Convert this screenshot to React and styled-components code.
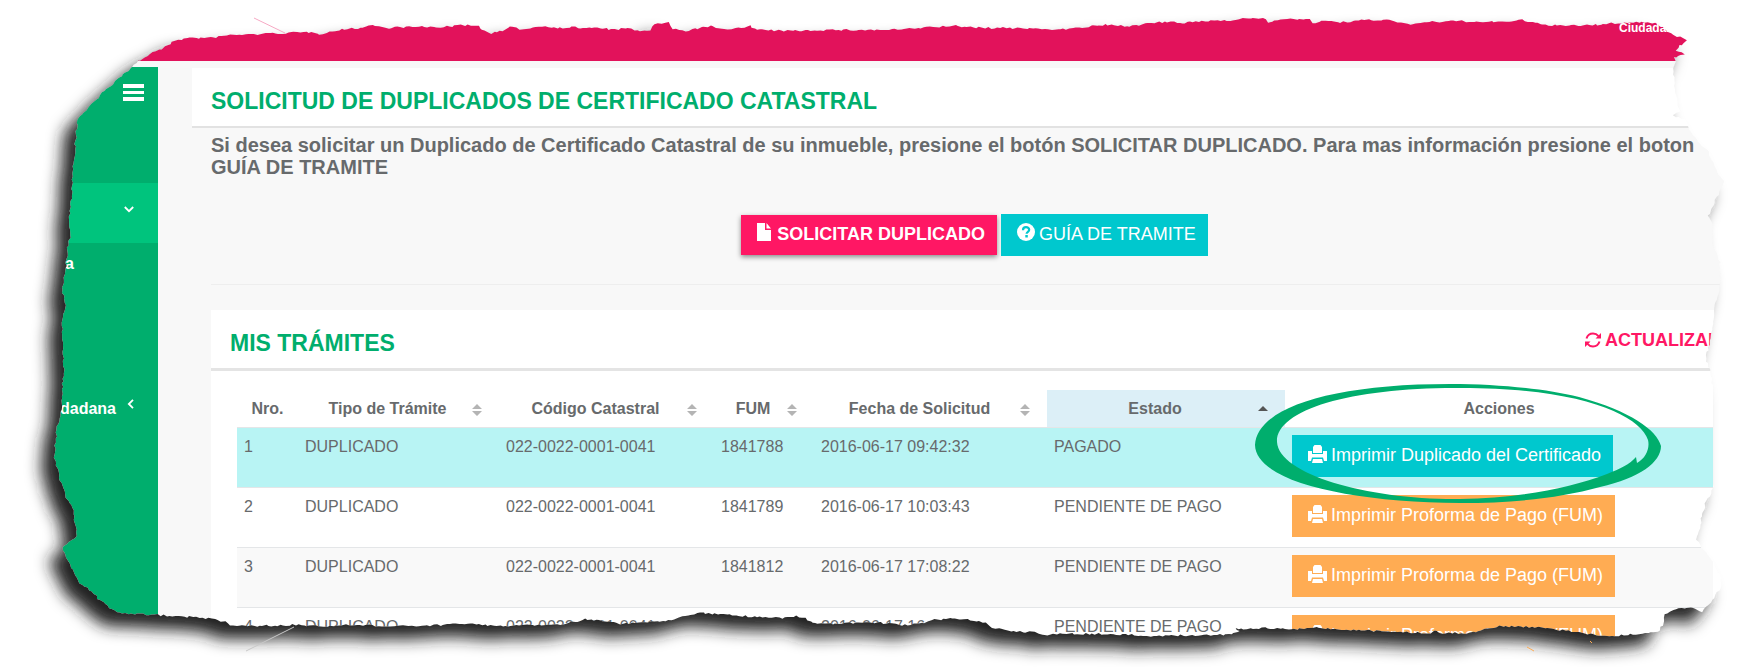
import React from "react";
import styled, { createGlobalStyle } from "styled-components";

const Global = createGlobalStyle`
  * { box-sizing: border-box; }
  body { margin: 0; background: #fff; font-family: "Liberation Sans", Arial, sans-serif; font-size: 16px; line-height: 23px; color: #676a6c; }
`;

const Page = styled.div`
  position: relative;
  height: 100vh;
  overflow: hidden;
  background: #f8f8f8;
`;
const TopBar = styled.header`
  display: flex;
  justify-content: flex-end;
  height: 61px;
  padding: 17px 72px 0 0;
  background: #e2125b;
  color: #fff;
  font-size: 12px;
  font-weight: 700;
`;
const Body = styled.div`
  display: flex;
  align-items: stretch;
  padding-top: 6px;
`;
const Sidebar = styled.nav`
  flex: none;
  width: 158px;
  background: #00ae6d;
  color: #fff;
  font-weight: 700;
`;
const MenuToggle = styled.button`
  display: flex;
  justify-content: flex-end;
  width: 100%;
  height: 116px;
  padding: 17px 14px 0 0;
  border: 0;
  background: none;
  color: #fff;
`;
const MenuLink = styled.a`
  display: flex;
  justify-content: flex-end;
  align-items: center;
  gap: 10px;
  height: ${(p) => p.$height}px;
  padding-right: ${(p) => p.$inset}px;
  background: ${(p) => (p.$active ? "#00c47d" : "transparent")};
  color: #fff;
  text-decoration: none;
  svg { margin-bottom: 8px; }
`;
const MenuList = styled.div`
  display: flex;
  flex-direction: column;
  gap: 100px;
`;
const Main = styled.main`
  flex: 1;
  min-width: 0;
  padding: 1px 0 0 34px;
`;
const TitleCard = styled.div`
  padding: 21px 19px 12px;
  background: #fff;
  border-bottom: 2px solid #e2e2e2;
`;
const Title = styled.h1`
  margin: 0;
  font-size: 23px;
  line-height: 25px;
  color: #00ae6d;
`;
const Content = styled.div`
  padding: 6px 0 0 19px;
`;
const Intro = styled.p`
  margin: 0;
  padding-right: 40px;
  font-size: 20px;
  line-height: 22px;
  font-weight: 700;
`;
const Buttons = styled.div`
  display: flex;
  justify-content: center;
  align-items: center;
  gap: 4px;
  padding: 36px 15px 28px 0;
`;
const Button = styled.button`
  display: flex;
  align-items: center;
  gap: ${(p) => (p.$raised ? 6 : 4)}px;
  height: ${(p) => (p.$raised ? 40 : 42)}px;
  padding: 0 12px ${(p) => (p.$cell ? 0 : 2)}px 16px;
  border: 0;
  background: ${(p) => p.$color};
  color: #fff;
  font-family: inherit;
  font-size: 18px;
  font-weight: ${(p) => (p.$raised ? 700 : 400)};
  white-space: nowrap;
  box-shadow: ${(p) => (p.$raised ? "0 2px 5px rgba(0,0,0,.45)" : "none")};
  svg { margin-top: -4px; }
`;
const Divider = styled.hr`
  margin: 0 0 25px;
  border: 0;
  border-top: 1px solid #eee;
`;
const Panel = styled.section`
  background: #fff;
`;
const PanelHead = styled.div`
  display: flex;
  justify-content: space-between;
  align-items: flex-start;
  padding: 21px 32px 12px 19px;
  border-bottom: 3px solid #e4e4e4;
`;
const Refresh = styled.a`
  display: flex;
  align-items: center;
  gap: 4px;
  height: 18px;
  color: #ff1764;
  font-size: 18px;
  font-weight: 700;
  text-decoration: none;
`;
const TableWrap = styled.div`
  padding: 19px 40px 0 26px;
`;
const Table = styled.table`
  width: 100%;
  table-layout: fixed;
  border-collapse: collapse;
`;
const Th = styled.th`
  height: 37px;
  padding: 0 7px;
  background: ${(p) => (p.$sorted ? "#dceff7" : "transparent")};
`;
const HeadCell = styled.span`
  display: flex;
  align-items: center;
  justify-content: center;
  span { flex: 1; }
  svg { margin: 4px 10px 0 2px; }
`;
const Row = styled.tr`
  background: ${(p) => p.$bg};
  border-top: 1px solid #e4e6e8;
`;
const Td = styled.td`
  height: 60px;
  padding: 7px 7px 10px;
  vertical-align: top;
  white-space: nowrap;
`;
const Overlay = styled.svg`
  position: absolute;
  inset: 0;
  width: 100%;
  height: 100%;
  pointer-events: none;
`;

const Sort = ({ active }) => (
  <svg width="10" height="13" viewBox="0 0 10 13" fill={active ? "#555" : "#b4b4b4"}>
    <path d={active ? "M5 2 10 7H0z" : "M5 0 10 5H0zM5 12 0 7H10z"} />
  </svg>
);
const Burger = () => (
  <svg width="21" height="17" viewBox="0 0 21 17" fill="#fff">
    <path d="M0 0h21v4H0zM0 7h21v3H0zM0 13h21v4H0z" />
  </svg>
);
const Chevron = ({ left }) => (
  <svg width="10" height="10" viewBox="0 0 10 10" fill="none" stroke="#fff" strokeWidth="1.8">
    <path d={left ? "M7 .8 2.8 5 7 9.2" : "M.8 3 5 7.2 9.2 3"} />
  </svg>
);
const FileIcon = () => (
  <svg width="14" height="18" viewBox="0 0 14 18" fill="#fff">
    <path d="M0 0h8v7h6v11H0zM9.500 0 14 5.500H9.500z" />
  </svg>
);
const HelpIcon = () => (
  <svg width="18" height="18" viewBox="0 0 18 18">
    <circle cx="9" cy="9" r="9" fill="#fff" />
    <path d="M6 7.200C6 5 7.200 4.100 9 4.100s3.200 1 3.200 2.700c0 2-2.600 2-2.600 4" fill="none" stroke="#00c8ce" strokeWidth="2.200" />
    <path d="M8.300 12h2.500v2.500H8.300z" fill="#00c8ce" />
  </svg>
);
const PrintIcon = () => (
  <svg width="19" height="18" viewBox="0 0 19 18" fill="#fff">
    <path d="M6.500 0h6L14 2v6H5V2zM0 6h4v3h11V6h4v10h-3l-1-3.500H4L3 16H0zM5 14h9l1 4H4z" />
  </svg>
);
const RefreshIcon = () => (
  <svg width="16" height="16" viewBox="0 0 16 16">
    <path d="M1.500 6.500C2.500 3.300 5 1.600 8 1.600c2.200 0 4 .8 5.500 2.600M14.500 9.500c-1 3.200-3.500 4.900-6.500 4.900-2.200 0-4-.8-5.500-2.600" fill="none" stroke="#ff1764" strokeWidth="2" />
    <path d="M16 1v5.500h-5.500zM0 15V9.500h5.500z" fill="#ff1764" />
  </svg>
);

const EDGE = [
  141,60, 145,58, 152,52, 162,49, 175,40, 190,38, 210,38, 230,35, 260,34, 285,33, 315,32, 320,34, 330,32, 345,29, 360,28, 372,25, 385,28, 400,27, 440,27,
  455,26, 465,25, 478,26, 482,30, 492,33, 503,31, 510,27, 520,29, 545,26, 560,28, 572,27, 580,28, 600,28, 615,30, 625,28, 637,31, 650,30, 655,24, 668,23, 672,29,
  685,31, 695,29, 710,26, 716,28, 725,30, 735,28, 750,26, 757,30, 790,31, 820,30, 880,30, 910,29, 930,27, 955,26, 985,28, 1015,28, 1045,29, 1070,29, 1085,27, 1105,25,
  1130,26, 1145,24, 1165,22, 1185,23, 1205,21, 1230,20, 1248,18, 1265,19, 1268,22, 1275,20, 1300,19, 1310,20, 1313,23, 1322,21, 1335,22, 1350,22, 1365,20, 1390,20, 1397,22,
  1410,24, 1430,22, 1460,21, 1480,22, 1500,22, 1522,20, 1532,23, 1540,24, 1563,26, 1595,25, 1615,23, 1645,22, 1658,24, 1668,31, 1674,35, 1681,37, 1686,41, 1680,46, 1676,50,
  1684,54, 1674,58, 1675,61, 1673,68, 1674,80, 1677,100, 1680,112, 1672,115, 1684,120, 1688,127, 1693,135, 1698,142, 1707,150, 1712,160, 1718,172, 1724,182, 1718,195,
  1708,216, 1713,225, 1712,245, 1720,262, 1720,285, 1714,310, 1712,330, 1706,358, 1710,370, 1713,385, 1713,487, 1703,510, 1697,540, 1702,548, 1712,560, 1720,575, 1722,585,
  1713,600, 1702,612, 1690,607, 1678,608, 1665,615, 1663,625, 1657,632, 1640,634, 1612,636, 1590,634, 1560,630, 1545,628, 1535,627, 1500,626, 1490,628, 1470,633, 1440,633,
  1435,630, 1430,633, 1400,632, 1350,630, 1313,627, 1300,629, 1280,629, 1265,628, 1235,629, 1240,632, 1220,635, 1150,636, 1110,634, 1060,634, 1045,635, 1035,632, 1020,632,
  1005,630, 992,627, 985,623, 970,620, 950,619, 935,620, 925,623, 905,625, 880,623, 850,623, 830,624, 815,623, 808,620, 802,617, 793,616, 785,618, 760,617, 730,615, 700,613,
  685,616, 675,619, 672,621, 645,622, 620,624, 605,621, 585,619, 575,622, 560,625, 520,625, 500,626, 470,624, 450,623, 440,625, 400,626, 345,625, 330,626, 295,625, 260,626,
  230,626, 225,622, 215,619, 190,617, 158,615, 120,613, 110,608, 98,598, 90,590, 80,583, 72,570, 65,555, 62,548, 72,540, 77,535, 74,520, 72,505, 66,498, 60,480, 54,455,
  57,430, 61,410, 62,390, 64,370, 62,340, 62,320, 66,305, 62,290, 66,265, 68,245, 71,235, 69,220, 72,195, 73,170, 76,135, 78,120, 88,107, 100,95, 115,82, 130,68,
];

// Roughens the outline with small repeatable steps so that it reads as torn paper.
function tornPath(flat) {
  let seed = 7;
  const rnd = () => {
    seed = (seed * 16807) % 2147483647;
    return seed / 2147483647 - 0.5;
  };
  const n = flat.length / 2;
  let d = "";
  for (let i = 0; i < n; i++) {
    const [x0, y0] = [flat[2 * i], flat[2 * i + 1]];
    const j = (i + 1) % n;
    const [x1, y1] = [flat[2 * j], flat[2 * j + 1]];
    const steps = Math.max(1, Math.round(Math.hypot(x1 - x0, y1 - y0) / 3));
    const straight = x0 === 1713 && x1 === 1713;
    for (let k = 0; k < steps; k++) {
      const t = k / steps;
      const r = straight ? 0 : 2;
      const x = x0 + (x1 - x0) * t + rnd() * r;
      const y = y0 + (y1 - y0) * t + rnd() * r;
      d += `${d ? "L" : "M"}${x.toFixed(1)} ${y.toFixed(1)}`;
    }
  }
  return d + "Z";
}
const TORN = tornPath(EDGE);
const OUTSIDE = "M-50-50H1803V717H-50Z" + TORN;

const Frame = () => (
  <Overlay viewBox="0 0 1753 667" preserveAspectRatio="none" aria-hidden="true">
    <defs>
      <clipPath id="outside"><path d={OUTSIDE} clipRule="evenodd" /></clipPath>
      <filter id="soft" x="-10%" y="-10%" width="120%" height="120%"><feGaussianBlur stdDeviation="8" /></filter>
    </defs>
    <path
      fill="#00ae6d"
      fillRule="evenodd"
      d="M1255 445C1257 408 1330 384 1450 384C1500 384 1545 389 1579 397C1630 411 1657 430 1661 446C1661 462 1640 478 1600 487C1560 498 1515 503 1460 503C1350 502 1256 482 1255 445ZM1277 442C1279 475 1370 500 1460 499C1520 498 1570 488 1607 474C1620 469 1630 464 1636 457L1637 463C1646 458 1650 448 1648 440C1640 415 1580 387 1455 388C1350 388 1276 410 1277 442Z"
    />
    <path d={OUTSIDE} fill="#fff" fillRule="evenodd" />
    <g clipPath="url(#outside)">
      <path d={TORN} transform="translate(-13 13)" fill="#222" filter="url(#soft)" />
    </g>
    <path d="M254 18 285 33" stroke="#f6a9c4" strokeWidth="1" />
    <path d="M246 651 294 627" stroke="#c8c8c8" strokeWidth="1" />
    <path d="M1527 647 1534 651M1590 641 1592 643" stroke="#ffac53" strokeWidth="1" />
  </Overlay>
);

const COLUMNS = [
  { label: "Nro.", width: "61px" },
  { label: "Tipo de Trámite", width: "201px", sort: true },
  { label: "Código Catastral", width: "215px", sort: true },
  { label: "FUM", width: "100px", sort: true },
  { label: "Fecha de Solicitud", width: "233px", sort: true },
  { label: "Estado", width: "238px", sort: true, sorted: true },
  { label: "Acciones" },
];
const ROWS = [
  ["1", "1841788", "2016-06-17 09:42:32", true, "#b8f4f4"],
  ["2", "1841789", "2016-06-17 10:03:43", false, "#fff"],
  ["3", "1841812", "2016-06-17 17:08:22", false, "#f9f9f9"],
  ["4", "1841811", "2016-06-17 16:27:10", false, "#fff"],
];

export default function App() {
  return (
    <>
      <Global />
      <Page>
        <TopBar>Ciudadano</TopBar>
        <Body>
          <Sidebar>
            <MenuToggle aria-label="Menú"><Burger /></MenuToggle>
            <MenuLink href="#tramites" $active $height={60} $inset={24} aria-label="Trámites"><Chevron /></MenuLink>
            <MenuList>
              <MenuLink href="#consulta" $height={41} $inset={84}>Consulta</MenuLink>
              <MenuLink href="#ciudadana" $height={48} $inset={22}>Ciudadana <Chevron left /></MenuLink>
            </MenuList>
          </Sidebar>
          <Main>
            <TitleCard><Title>SOLICITUD DE DUPLICADOS DE CERTIFICADO CATASTRAL</Title></TitleCard>
            <Content>
              <Intro>
                Si desea solicitar un Duplicado de Certificado Catastral de su inmueble, presione el botón SOLICITAR DUPLICADO. Para mas información presione el boton GUÍA DE TRAMITE
              </Intro>
              <Buttons>
                <Button $color="#ff1764" $raised><FileIcon />SOLICITAR DUPLICADO</Button>
                <Button $color="#00c8ce"><HelpIcon />GUÍA DE TRAMITE</Button>
              </Buttons>
              <Divider />
              <Panel>
                <PanelHead>
                  <Title as="h2">MIS TRÁMITES</Title>
                  <Refresh href="#actualizar"><RefreshIcon />ACTUALIZAR</Refresh>
                </PanelHead>
                <TableWrap>
                  <Table>
                    <colgroup>
                      {COLUMNS.map((c) => <col key={c.label} width={c.width} />)}
                    </colgroup>
                    <thead>
                      <tr>
                        {COLUMNS.map((c) => (
                          <Th key={c.label} $sorted={c.sorted}>
                            <HeadCell><span>{c.label}</span>{c.sort && <Sort active={c.sorted} />}</HeadCell>
                          </Th>
                        ))}
                      </tr>
                    </thead>
                    <tbody>
                      {ROWS.map(([nro, fum, fecha, paid, bg]) => (
                        <Row key={nro} $bg={bg}>
                          <Td>{nro}</Td>
                          <Td>DUPLICADO</Td>
                          <Td>022-0022-0001-0041</Td>
                          <Td>{fum}</Td>
                          <Td>{fecha}</Td>
                          <Td>{paid ? "PAGADO" : "PENDIENTE DE PAGO"}</Td>
                          <Td>
                            <Button $cell $color={paid ? "#00c8ce" : "#ffac53"}>
                              <PrintIcon />
                              {paid ? "Imprimir Duplicado del Certificado" : "Imprimir Proforma de Pago (FUM)"}
                            </Button>
                          </Td>
                        </Row>
                      ))}
                    </tbody>
                  </Table>
                </TableWrap>
              </Panel>
            </Content>
          </Main>
        </Body>
        <Frame />
      </Page>
    </>
  );
}
